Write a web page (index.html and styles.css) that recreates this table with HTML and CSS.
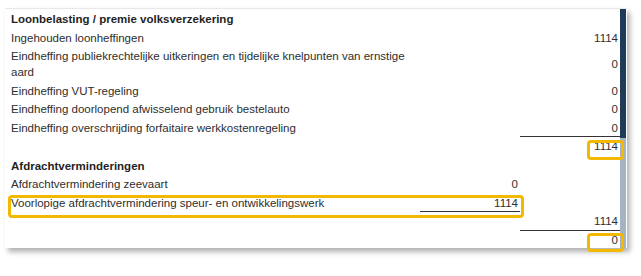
FILE: index.html
```html
<!DOCTYPE html>
<html lang="nl">
<head>
  <meta charset="UTF-8" />
  <meta name="viewport" content="width=device-width, initial-scale=1.0"/>
  <title>Aangifte loonheffingen</title>
  <link rel="stylesheet" href="styles.css">
</head>
<body>
  <div class="sheet">
    <div class="content">
      <div class="row head"><div class="label">Loonbelasting / premie volksverzekering</div></div>
      <div class="row"><div class="label">Ingehouden loonheffingen</div><div class="mid"></div><div class="amt">1114</div></div>
      <div class="row"><div class="label">Eindheffing publiekrechtelijke uitkeringen en tijdelijke knelpunten van ernstige aard</div><div class="mid"></div><div class="amt">0</div></div>
      <div class="row"><div class="label">Eindheffing VUT-regeling</div><div class="mid"></div><div class="amt">0</div></div>
      <div class="row"><div class="label">Eindheffing doorlopend afwisselend gebruik bestelauto</div><div class="mid"></div><div class="amt">0</div></div>
      <div class="row"><div class="label">Eindheffing overschrijding forfaitaire werkkostenregeling</div><div class="mid"></div><div class="amt sum">0</div></div>
      <div class="row"><div class="label"></div><div class="mid"></div><div class="amt mark">1114</div></div>

      <div class="row head gap"><div class="label">Afdrachtverminderingen</div></div>
      <div class="row"><div class="label">Afdrachtvermindering zeevaart</div><div class="mid">0</div><div class="amt"></div></div>
      <div class="row"><div class="pair mark"><div class="label">Voorlopige afdrachtvermindering speur- en ontwikkelingswerk</div><div class="mid sum">1114</div></div><div class="amt"></div></div>
      <div class="row"><div class="label"></div><div class="mid"></div><div class="amt sum">1114</div></div>
      <div class="row last"><div class="label"></div><div class="mid"></div><div class="amt mark">0</div></div>
    </div>
    <div class="scrollbar">
      <div class="thumb"></div>
      <div class="track"></div>
    </div>
  </div>
</body>
</html>
```

FILE: styles.css
```css
html, body {
  margin: 0;
  background: #fff;
}
body {
  min-height: 276px;
  font-family: "Liberation Sans", Arial, sans-serif;
  font-size: 11.5px;
  color: #2e2e2e;
}
.sheet {
  margin: 8px 0 0 5px;
  width: 622px;
  height: 239px;
  display: flex;
  background: #fff;
  border-top: 1px solid #e8e8e8;
  box-shadow: 3px 4px 5px rgba(0,0,0,0.3);
}
.content {
  flex: 1;
  padding: 1px 0 0 6px;
}
.row {
  display: grid;
  grid-template-columns: 409px 100px 100px;
  align-items: center;
}
.row > div, .pair > div {
  padding: 1.25px 0;
  line-height: 16px;
}
.label {
  padding-right: 10px !important;
}
.head .label {
  font-weight: bold;
  color: #1f1f1f;
}
.gap {
  margin-top: 1px;
}
.mid, .amt {
  padding-right: 2px !important;
  align-self: stretch;
  display: flex;
  align-items: center;
  justify-content: flex-end;
}
/* underline below a column, drawn without adding height */
.sum {
  box-shadow: inset 0 -1px 0 #333;
}
.pair {
  grid-column: 1 / 3;
  display: grid;
  grid-template-columns: 409px 100px;
  align-items: center;
  padding: 0 !important;
}

/* yellow annotation frames */
.mark {
  position: relative;
}
.mark::after {
  content: "";
  position: absolute;
  z-index: 2;
  border: 3px solid #f3b800;
  border-radius: 4px;
}
.pair.mark::after {
  left: -3px;
  right: -4px;
  top: 1px;
  bottom: -6px;
}
.amt.mark::after {
  left: 67px;
  right: -4px;
  top: 3px;
  bottom: -4px;
}
.last .amt.mark::after {
  top: 2px;
  bottom: -3px;
}

.scrollbar {
  width: 6px;
  margin-right: 1px;
  display: flex;
  flex-direction: column;
}
.thumb {
  height: 129px;
  background: #1f3b58;
}
.track {
  flex: 1;
  background: #a6b3c3;
}
```
